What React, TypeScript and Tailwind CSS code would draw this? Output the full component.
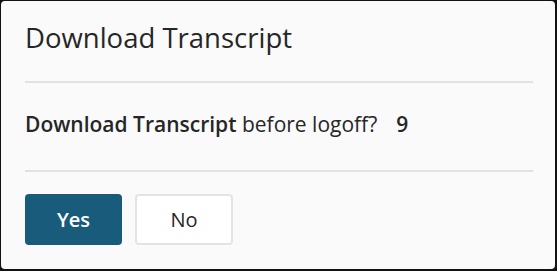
export default function App() {
  return (
    <div className="w-[557px] h-[271px] bg-[#111] pt-px pl-px pr-[2px] pb-[2px]" style={{ fontFamily: '"Open Sans", "Noto Sans", sans-serif' }}>
      <div className="h-full rounded-[4px] bg-[#fafafa] pl-6 pr-[22px] text-[#262626]">
        <div className="pt-[18px] pb-[24px] border-b-2 border-[#e2e2e2]">
          <h2 className="text-[27.5px] leading-[38px] font-medium">Download Transcript</h2>
        </div>
        <div className="pt-[25px] pb-[30px] border-b-2 border-[#e2e2e2]">
          <p className="text-[21px] leading-[32px]">
            <span className="font-semibold">Download Transcript</span> before logoff?
            <span className="font-semibold ml-[19px]">9</span>
          </p>
        </div>
        <div className="flex gap-[13px] pt-[22px]">
          <button className="w-[97px] h-[51px] rounded-[4px] bg-[#185b7a] text-white text-[20px] font-semibold">Yes</button>
          <button className="w-[98px] h-[51px] rounded-[4px] bg-white border-2 border-[#e3e3e3] text-[#262626] text-[20px]">No</button>
        </div>
      </div>
    </div>
  )
}
